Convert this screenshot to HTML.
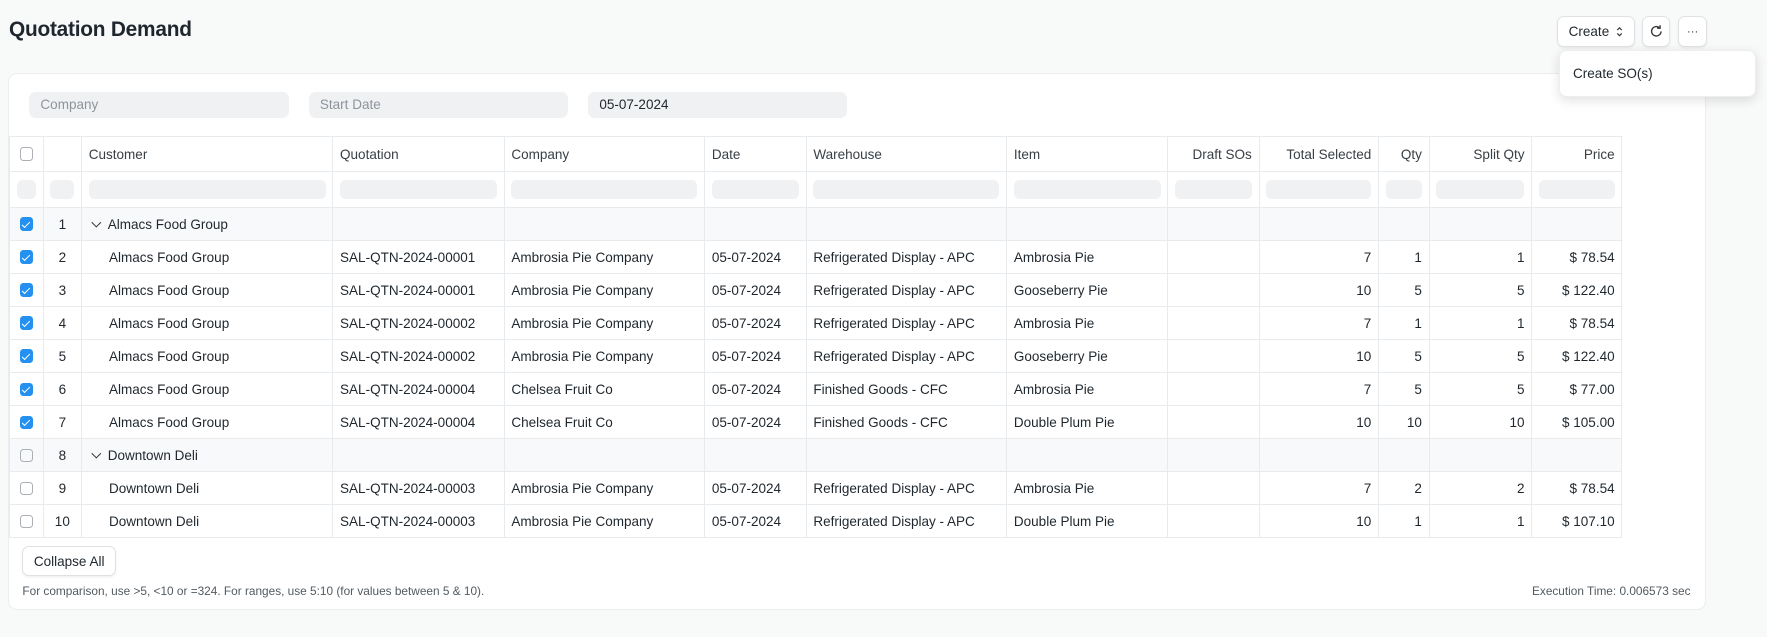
<!DOCTYPE html>
<html><head><meta charset="utf-8"><style>
html,body{margin:0;padding:0;}
body{width:1767px;height:637px;overflow:hidden;background:#f8f9f9;font-family:"Liberation Sans",Arial,sans-serif;color:#1f272e;}
#w{zoom:1.12691;width:1568px;height:565px;position:relative;}
.abs{position:absolute;}
h1{position:absolute;left:8px;top:16px;margin:0;font-size:18.5px;font-weight:bold;color:#1f272e;letter-spacing:-0.2px;}
.btn{position:absolute;background:#fff;border:1px solid #dfe2e5;border-radius:6px;box-shadow:0 1px 2px rgba(0,0,0,.06);font-size:12px;display:flex;align-items:center;justify-content:center;box-sizing:border-box;}
.card{position:absolute;left:7px;top:65px;width:1507px;height:476px;background:#fff;border:1px solid #ebeef0;border-radius:8px;box-sizing:border-box;overflow:hidden;}
.f{position:absolute;top:16px;height:23px;background:#f0f1f3;border-radius:6px;font-size:12px;line-height:23px;padding-left:10px;box-sizing:border-box;color:#8d959c;}
table{position:absolute;left:0;top:55px;border-collapse:collapse;font-size:12px;table-layout:fixed;}
td{border:1px solid #e8ebee;height:29.3px;padding:0 6px;white-space:nowrap;overflow:hidden;box-sizing:border-box;}
tr.h td{height:31px;color:#383f45;}
tr.fl td{height:32px;}
tr.g td{background:#f8f9fa;}
.r{text-align:right;}
.c{text-align:center;}
.ph{height:17px;background:#f0f1f3;border-radius:5px;}
.cb{width:12px;height:12px;border:1px solid #aab0b6;border-radius:3px;margin:auto;box-sizing:border-box;}
.cb.on{background:#2490ef;border-color:#2490ef;position:relative;}
.cb.on:after{content:"";position:absolute;left:3.5px;top:1px;width:3px;height:6px;border:solid #fff;border-width:0 1.5px 1.5px 0;transform:rotate(45deg);}
.ind{padding-left:24px;}
.chev{display:inline-block;width:5px;height:5px;border:solid #333;border-width:0 1.2px 1.2px 0;transform:rotate(45deg);margin:0 7px 3px 4px;}
</style></head><body><div id="w">
<h1>Quotation Demand</h1>
<div class="btn" style="left:1382px;top:14px;width:69px;height:28px;">Create <svg width="8" height="12" viewBox="0 0 8 12" style="margin-left:5px"><path d="M2 4.5L4 2.5L6 4.5M2 7.5L4 9.5L6 7.5" fill="none" stroke="#333" stroke-width="1"/></svg></div>
<div class="btn" style="left:1457px;top:14px;width:25px;height:28px;"><svg width="13" height="13" viewBox="0 0 14 14"><path d="M11.5 7a4.5 4.5 0 1 1-1.4-3.3" fill="none" stroke="#333" stroke-width="1.3"/><path d="M10.6 1.2v2.8h-2.8" fill="none" stroke="#333" stroke-width="1.3"/></svg></div>
<div class="btn" style="left:1489px;top:14px;width:26px;height:28px;font-size:10px;">···</div>
<div class="card">
<div class="f" style="left:18px;width:231px;">Company</div>
<div class="f" style="left:266px;width:230px;">Start Date</div>
<div class="f" style="left:514px;width:230px;color:#1f272e;">05-07-2024</div>
<table>
<colgroup><col style="width:30px"><col style="width:34px"><col style="width:223px"><col style="width:152px"><col style="width:178px"><col style="width:90px"><col style="width:178px"><col style="width:143px"><col style="width:81px"><col style="width:106px"><col style="width:45px"><col style="width:91px"><col style="width:80px"></colgroup>
<tr class="h"><td><div class="cb"></div></td><td></td><td>Customer</td><td>Quotation</td><td>Company</td><td>Date</td><td>Warehouse</td><td>Item</td><td class="r">Draft SOs</td><td class="r">Total Selected</td><td class="r">Qty</td><td class="r">Split Qty</td><td class="r">Price</td></tr>
<tr class="fl"><td><div class="ph"></div></td><td><div class="ph"></div></td><td><div class="ph"></div></td><td><div class="ph"></div></td><td><div class="ph"></div></td><td><div class="ph"></div></td><td><div class="ph"></div></td><td><div class="ph"></div></td><td><div class="ph"></div></td><td><div class="ph"></div></td><td><div class="ph"></div></td><td><div class="ph"></div></td><td><div class="ph"></div></td></tr>
<tr class="g"><td><div class="cb on"></div></td><td class="c">1</td><td><span class="chev"></span>Almacs Food Group</td><td></td><td></td><td></td><td></td><td></td><td></td><td></td><td></td><td></td><td></td></tr>
<tr><td><div class="cb on"></div></td><td class="c">2</td><td class="ind">Almacs Food Group</td><td>SAL-QTN-2024-00001</td><td>Ambrosia Pie Company</td><td>05-07-2024</td><td>Refrigerated Display - APC</td><td>Ambrosia Pie</td><td></td><td class="r">7</td><td class="r">1</td><td class="r">1</td><td class="r">$ 78.54</td></tr>
<tr><td><div class="cb on"></div></td><td class="c">3</td><td class="ind">Almacs Food Group</td><td>SAL-QTN-2024-00001</td><td>Ambrosia Pie Company</td><td>05-07-2024</td><td>Refrigerated Display - APC</td><td>Gooseberry Pie</td><td></td><td class="r">10</td><td class="r">5</td><td class="r">5</td><td class="r">$ 122.40</td></tr>
<tr><td><div class="cb on"></div></td><td class="c">4</td><td class="ind">Almacs Food Group</td><td>SAL-QTN-2024-00002</td><td>Ambrosia Pie Company</td><td>05-07-2024</td><td>Refrigerated Display - APC</td><td>Ambrosia Pie</td><td></td><td class="r">7</td><td class="r">1</td><td class="r">1</td><td class="r">$ 78.54</td></tr>
<tr><td><div class="cb on"></div></td><td class="c">5</td><td class="ind">Almacs Food Group</td><td>SAL-QTN-2024-00002</td><td>Ambrosia Pie Company</td><td>05-07-2024</td><td>Refrigerated Display - APC</td><td>Gooseberry Pie</td><td></td><td class="r">10</td><td class="r">5</td><td class="r">5</td><td class="r">$ 122.40</td></tr>
<tr><td><div class="cb on"></div></td><td class="c">6</td><td class="ind">Almacs Food Group</td><td>SAL-QTN-2024-00004</td><td>Chelsea Fruit Co</td><td>05-07-2024</td><td>Finished Goods - CFC</td><td>Ambrosia Pie</td><td></td><td class="r">7</td><td class="r">5</td><td class="r">5</td><td class="r">$ 77.00</td></tr>
<tr><td><div class="cb on"></div></td><td class="c">7</td><td class="ind">Almacs Food Group</td><td>SAL-QTN-2024-00004</td><td>Chelsea Fruit Co</td><td>05-07-2024</td><td>Finished Goods - CFC</td><td>Double Plum Pie</td><td></td><td class="r">10</td><td class="r">10</td><td class="r">10</td><td class="r">$ 105.00</td></tr>
<tr class="g"><td><div class="cb"></div></td><td class="c">8</td><td><span class="chev"></span>Downtown Deli</td><td></td><td></td><td></td><td></td><td></td><td></td><td></td><td></td><td></td><td></td></tr>
<tr><td><div class="cb"></div></td><td class="c">9</td><td class="ind">Downtown Deli</td><td>SAL-QTN-2024-00003</td><td>Ambrosia Pie Company</td><td>05-07-2024</td><td>Refrigerated Display - APC</td><td>Ambrosia Pie</td><td></td><td class="r">7</td><td class="r">2</td><td class="r">2</td><td class="r">$ 78.54</td></tr>
<tr><td><div class="cb"></div></td><td class="c">10</td><td class="ind">Downtown Deli</td><td>SAL-QTN-2024-00003</td><td>Ambrosia Pie Company</td><td>05-07-2024</td><td>Refrigerated Display - APC</td><td>Double Plum Pie</td><td></td><td class="r">10</td><td class="r">1</td><td class="r">1</td><td class="r">$ 107.10</td></tr>
</table>
<div class="btn" style="left:12px;top:419px;width:83px;height:26px;">Collapse All</div>
<div class="abs" style="left:12px;top:452px;font-size:10.5px;color:#525a61;">For comparison, use &gt;5, &lt;10 or =324. For ranges, use 5:10 (for values between 5 &amp; 10).</div>
<div class="abs" style="right:13px;top:452px;font-size:10.5px;color:#525a61;">Execution Time: 0.006573 sec</div>
</div>
<div class="abs" style="left:1383px;top:44px;width:175px;height:42px;background:#fff;border:1px solid #eceef0;border-radius:7px;box-shadow:0 3px 10px rgba(0,0,0,.12);box-sizing:border-box;font-size:12px;padding:14px 0 0 12px;">Create SO(s)</div>
</div></body></html>
